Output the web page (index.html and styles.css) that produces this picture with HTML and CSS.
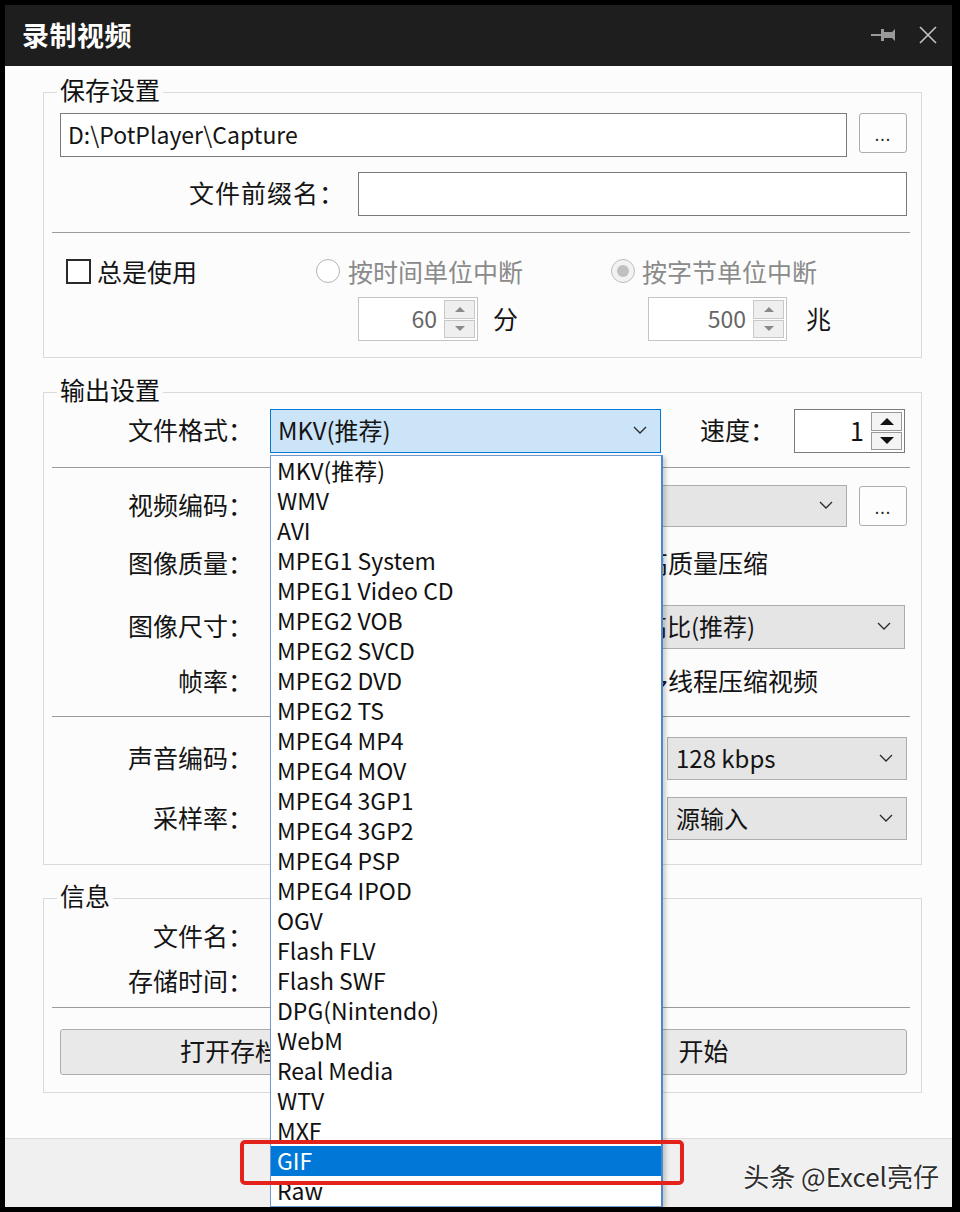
FILE: index.html
```html
<!DOCTYPE html>
<html lang="zh-CN">
<head>
<meta charset="utf-8">
<title>录制视频</title>
<link rel="stylesheet" href="styles.css">
</head>
<body>
<div class="window">
  <header class="titlebar">
    <span class="title">录制视频</span>
    <span class="title-icons">
      <svg class="icon-pin" width="26" height="16" viewBox="0 0 26 16"><line x1="0" y1="8" x2="10" y2="8" stroke="#9a9a9a" stroke-width="2"/><rect x="10" y="2" width="3" height="12" fill="#9a9a9a"/><path d="M13 5 H21 L24 2 V14 L21 11 H13 Z" fill="#9a9a9a"/></svg>
      <svg class="icon-close" width="18" height="18" viewBox="0 0 18 18"><path d="M1 1 L17 17 M17 1 L1 17" stroke="#c4c4c4" stroke-width="1.6" fill="none"/></svg>
    </span>
  </header>

  <main class="panel">
    <fieldset class="group group-save">
      <legend>保存设置</legend>
      <div class="row row-path">
        <div class="field field-path">D:\PotPlayer\Capture</div>
        <div class="btn-dots">...</div>
      </div>
      <div class="row row-prefix">
        <span class="lbl lbl-wide">文件前缀名：</span>
        <div class="field field-prefix"></div>
      </div>
      <hr class="sep">
      <div class="opts">
        <div class="opt"><span class="checkbox"></span>总是使用</div>
        <div class="opt disabled"><span class="radio"></span>按时间单位中断</div>
        <div class="opt disabled"><span class="radio checked"></span>按字节单位中断</div>
        <div></div>
        <div class="spin-item spin-time">
          <div class="spin spin-60"><span class="spin-val">60</span><span class="spin-btns"><span class="sb up"></span><span class="sb down"></span></span></div>
          <span class="unit">分</span>
        </div>
        <div class="spin-item spin-size">
          <div class="spin spin-500"><span class="spin-val">500</span><span class="spin-btns"><span class="sb up"></span><span class="sb down"></span></span></div>
          <span class="unit unit-mb">兆</span>
        </div>
      </div>
    </fieldset>

    <fieldset class="group group-output">
      <legend>输出设置</legend>
      <div class="frow frow-format">
        <span class="lbl">文件格式：</span>
        <div class="ctrls">
          <div class="combo combo-active combo-format"><span>MKV(推荐)</span><svg class="chev" width="14" height="8" viewBox="0 0 14 8"><polyline points="1,1 7,7 13,1"/></svg></div>
          <span class="speed-lbl">速度：</span>
          <div class="spin spin-speed"><span class="spin-val dark">1</span><span class="spin-btns"><span class="sb up dark"></span><span class="sb down dark"></span></span></div>
        </div>
      </div>
      <hr class="sep sep-a">
      <div class="frow frow-vcodec">
        <span class="lbl">视频编码：</span>
        <div class="ctrls">
          <div class="combo combo-gray combo-fill combo-end"><svg class="chev" width="14" height="8" viewBox="0 0 14 8"><polyline points="1,1 7,7 13,1"/></svg></div>
          <div class="btn-dots">...</div>
        </div>
      </div>
      <div class="frow frow-text frow-quality">
        <span class="lbl">图像质量：</span>
        <div class="ctrls"><span class="tail-text">高质量压缩</span></div>
      </div>
      <div class="frow frow-size">
        <span class="lbl">图像尺寸：</span>
        <div class="ctrls">
          <div class="combo combo-gray combo-fill combo-size"><span class="size-text">高比(推荐)</span><svg class="chev" width="14" height="8" viewBox="0 0 14 8"><polyline points="1,1 7,7 13,1"/></svg></div>
        </div>
      </div>
      <div class="frow frow-text frow-fps">
        <span class="lbl">帧率：</span>
        <div class="ctrls"><span class="tail-text">多线程压缩视频</span></div>
      </div>
      <hr class="sep sep-b">
      <div class="frow frow-acodec">
        <span class="lbl">声音编码：</span>
        <div class="ctrls">
          <div class="combo combo-gray combo-fill combo-audio combo-end"><svg class="chev" width="14" height="8" viewBox="0 0 14 8"><polyline points="1,1 7,7 13,1"/></svg></div>
          <div class="combo combo-gray combo-audio combo-small"><span>128 kbps</span><svg class="chev" width="14" height="8" viewBox="0 0 14 8"><polyline points="1,1 7,7 13,1"/></svg></div>
        </div>
      </div>
      <div class="frow frow-rate">
        <span class="lbl">采样率：</span>
        <div class="ctrls">
          <div class="combo combo-gray combo-fill combo-audio combo-end"><svg class="chev" width="14" height="8" viewBox="0 0 14 8"><polyline points="1,1 7,7 13,1"/></svg></div>
          <div class="combo combo-gray combo-audio combo-small"><span>源输入</span><svg class="chev" width="14" height="8" viewBox="0 0 14 8"><polyline points="1,1 7,7 13,1"/></svg></div>
        </div>
      </div>
    </fieldset>

    <fieldset class="group group-info">
      <legend>信息</legend>
      <div class="frow frow-text frow-name">
        <span class="lbl">文件名：</span>
        <div class="ctrls"></div>
      </div>
      <div class="frow frow-text frow-time">
        <span class="lbl">存储时间：</span>
        <div class="ctrls"></div>
      </div>
      <hr class="sep sep-c">
      <div class="btn-row">
        <div class="btn btn-open">打开存档文件夹</div>
        <div class="btn btn-start">开始</div>
      </div>
    </fieldset>
  </main>

  <footer class="statusbar"></footer>

  <ul class="dropdown">
    <li>MKV(推荐)</li>
    <li>WMV</li>
    <li>AVI</li>
    <li>MPEG1 System</li>
    <li>MPEG1 Video CD</li>
    <li>MPEG2 VOB</li>
    <li>MPEG2 SVCD</li>
    <li>MPEG2 DVD</li>
    <li>MPEG2 TS</li>
    <li>MPEG4 MP4</li>
    <li>MPEG4 MOV</li>
    <li>MPEG4 3GP1</li>
    <li>MPEG4 3GP2</li>
    <li>MPEG4 PSP</li>
    <li>MPEG4 IPOD</li>
    <li>OGV</li>
    <li>Flash FLV</li>
    <li>Flash SWF</li>
    <li>DPG(Nintendo)</li>
    <li>WebM</li>
    <li>Real Media</li>
    <li>WTV</li>
    <li>MXF</li>
    <li class="selected">GIF</li>
    <li>Raw</li>
  </ul>
  <div class="highlight-box"></div>
  <div class="watermark">头条 @Excel亮仔</div>
</div>
</body>
</html>
```

FILE: styles.css
```css
* { box-sizing: border-box; }
html, body { margin: 0; padding: 0; }
body {
  background: #000;
  width: 960px;
  height: 1212px;
  overflow: hidden;
  font-family: "Noto Sans CJK SC", "Noto Sans", sans-serif;
  color: #141414;
}

.window {
  position: relative;
  margin: 5px 8px 5px 5px;
  height: 1202px;
  overflow: hidden;
  display: flex;
  flex-direction: column;
  background: #fcfcfc;
}

/* title bar */
.titlebar {
  height: 61px;
  flex: none;
  background: #1e1e1e;
  display: flex;
  align-items: center;
  justify-content: space-between;
  padding: 0 15px 2px 17px;
}
.title {
  color: #fff;
  font-size: 27px;
  font-weight: 700;
  line-height: 32px;
  letter-spacing: 0.5px;
}
.title-icons { display: flex; align-items: center; gap: 22px; }
.icon-pin { display: block; }
.icon-close { display: block; }

/* main panel */
.panel {
  flex: 1;
  padding: 0 30px 0 38px;
  display: flex;
  flex-direction: column;
}

.group {
  margin: 0;
  min-width: 0;
  border: 1px solid #dadada;
  padding: 0 14px 0 16px;
}
.group legend {
  font-size: 25px;
  line-height: 22px;
  padding: 0 3px 6px;
  margin-left: -3px;
  color: #111;
}
.group-save { margin-top: 12px; padding-top: 7px; padding-bottom: 16px; }
.group-output { margin-top: 20px; padding-top: 3px; padding-bottom: 24px; }
.group-info { margin-top: 19px; padding-top: 10px; padding-bottom: 17px; }

.sep {
  border: 0;
  border-top: 1px solid #9a9a9a;
  height: 0;
  margin: 16px -3px 0 -8px;
}
.sep-a { margin-top: 14px; }
.sep-b { margin-top: 19px; }
.sep-c { margin-top: 10px; }

/* fields */
.row { display: flex; }
.row-path { gap: 12px; align-items: flex-start; }
.row-prefix { margin-top: 15px; align-items: center; gap: 13px; }

.field {
  height: 44px;
  border: 1px solid #7a7a7a;
  background: #fff;
  font-size: 23px;
  line-height: 40px;
  padding: 0 0 2px 7px;
}
.field-path { flex: 1; }
.field-prefix { flex: 1; }

.lbl {
  font-size: 25px;
  line-height: 26px;
  padding-bottom: 4px;
  text-align: right;
  flex: none;
}
.lbl-wide { width: 285px; letter-spacing: 1px; }

.btn-dots {
  width: 48px;
  height: 40px;
  flex: none;
  border: 1px solid #adadad;
  border-radius: 3px;
  background: #fdfdfd;
  font-size: 16px;
  line-height: 40px;
  text-align: center;
  color: #222;
  letter-spacing: 1px;
}

/* options grid */
.opts {
  margin-top: 23px;
  display: grid;
  grid-template-columns: 256px 295px 1fr;
  grid-template-rows: 30px 44px;
  row-gap: 11px;
}
.opt {
  display: flex;
  align-items: center;
  font-size: 25px;
  line-height: 30px;
}
.opt.disabled { color: #8a8a8a; }
.checkbox {
  width: 25px;
  height: 25px;
  border: 2px solid #2a2a2a;
  background: #fff;
  margin: 0 6px;
  flex: none;
}
.radio {
  width: 24px;
  height: 24px;
  border: 1px solid #b5b5b5;
  border-radius: 50%;
  background: #fff;
  margin-right: 8px;
  flex: none;
  display: flex;
  align-items: center;
  justify-content: center;
}
.radio.checked { background: #f2f2f2; border-color: #bdbdbd; margin-right: 7px; }
.radio.checked::after {
  content: "";
  width: 12px;
  height: 12px;
  border-radius: 50%;
  background: #c0c0c0;
}

.spin-item { display: flex; align-items: center; }
.spin-time { margin-left: 42px; }
.spin-size { margin-left: 37px; }
.unit { font-size: 25px; line-height: 26px; padding-bottom: 3px; margin-left: 15px; }
.unit-mb { margin-left: 19px; }

.spin {
  height: 44px;
  border: 1px solid #c4c4c4;
  background: #fff;
  display: flex;
  align-items: stretch;
}
.spin-60 { width: 120px; }
.spin-500 { width: 139px; }
.spin-speed { width: 111px; border-color: #7a7a7a; }
.spin-val {
  flex: 1;
  text-align: right;
  font-size: 23px;
  line-height: 40px;
  padding: 0 7px 2px 0;
  color: #666;
}
.spin-val.dark { color: #111; font-size: 25px; }
.spin-btns {
  width: 33px;
  display: flex;
  flex-direction: column;
  gap: 1px;
  padding: 2px 2px 2px 0;
}
.sb {
  flex: 1;
  border: 1px solid #c8c8c8;
  background: #efefef;
  display: flex;
  align-items: center;
  justify-content: center;
}
.sb::after {
  content: "";
  width: 0;
  height: 0;
  border-left: 5px solid transparent;
  border-right: 5px solid transparent;
}
.sb.up::after { border-bottom: 5px solid #8a8a8a; }
.sb.down::after { border-top: 5px solid #8a8a8a; }
.sb.dark { border-color: #9a9a9a; background: #f4f4f4; }
.sb.up.dark::after { border-bottom: 7px solid #111; border-left-width: 7px; border-right-width: 7px; }
.sb.down.dark::after { border-top: 7px solid #111; border-left-width: 7px; border-right-width: 7px; }

/* output rows */
.frow {
  display: grid;
  grid-template-columns: 193px 1fr;
  column-gap: 17px;
  align-items: center;
}
.frow .lbl { text-align: right; }
.ctrls { display: flex; align-items: center; }
.frow-vcodec { margin-top: 17px; }
.frow-vcodec .ctrls { gap: 12px; }
.frow-text { height: 30px; }
.frow-quality { margin-top: 22px; }
.frow-size { margin-top: 26px; }
.frow-fps { margin-top: 18px; }
.frow-acodec { margin-top: 20px; }
.frow-rate { margin-top: 17px; }
.frow-acodec .ctrls, .frow-rate .ctrls { gap: 12px; }
.frow-name { margin-top: 0; }
.frow-time { margin-top: 15px; }

.tail-text {
  font-size: 25px;
  line-height: 26px;
  padding: 0 0 4px 373px;
  white-space: nowrap;
}

.combo {
  display: flex;
  align-items: center;
  justify-content: space-between;
  border: 1px solid #adadad;
  background: #e5e5e5;
  font-size: 24px;
  line-height: 28px;
  padding: 0 13px 2px 7px;
  white-space: nowrap;
}
.combo-end { justify-content: flex-end; }
.combo .chev { flex: none; }
.chev polyline { fill: none; stroke: #2a2a2a; stroke-width: 1.3; }
.combo-active {
  width: 391px;
  height: 44px;
  border-color: #0078d7;
  background: #cce4f7;
}
.combo-gray { height: 42px; }
.combo-fill { flex: 1; }
.combo-size { height: 44px; margin-right: 2px; }
.size-text { padding-left: 365px; }
.combo-audio { height: 43px; }
.combo-small { width: 240px; flex: none; padding-left: 8px; }

.speed-lbl {
  font-size: 25px;
  line-height: 26px;
  padding-bottom: 4px;
  margin-left: 39px;
  width: 94px;
}

/* buttons */
.btn-row { margin-top: 21px; display: flex; gap: 25px; }
.btn {
  height: 46px;
  border: 1px solid #adadad;
  border-radius: 3px;
  background: #e9e9e9;
  font-size: 25px;
  line-height: 40px;
  padding-bottom: 4px;
  text-align: center;
}
.btn-open { width: 415px; }
.btn-start { flex: 1; }

/* status bar */
.statusbar {
  height: 69px;
  flex: none;
  border-top: 1px solid #dcdcdc;
  background: #f0f0f0;
}

/* dropdown popup */
.dropdown {
  position: absolute;
  left: 265px;
  top: 450px;
  width: 393px;
  margin: 0;
  padding: 0;
  list-style: none;
  background: #fff;
  border: 1px solid #6f98cf;
  border-right: 2px solid #4f86cc;
  box-shadow: 3px 2px 4px rgba(0, 0, 0, 0.18);
}
.dropdown li {
  height: 30px;
  line-height: 28px;
  padding: 0 0 2px 6px;
  font-size: 23px;
  color: #111;
  white-space: nowrap;
}
.dropdown li.selected {
  background: #0078d7;
  color: #fff;
}

.highlight-box {
  position: absolute;
  left: 235px;
  top: 1135px;
  width: 444px;
  height: 45px;
  border: 4px solid #e4221c;
  border-radius: 5px;
}

.watermark {
  position: absolute;
  right: 13px;
  top: 1156px;
  font-size: 26px;
  line-height: 30px;
  color: #2e2e2e;
  text-shadow: 0 0 2px #fff, 0 0 2px #fff;
  white-space: nowrap;
}
```
